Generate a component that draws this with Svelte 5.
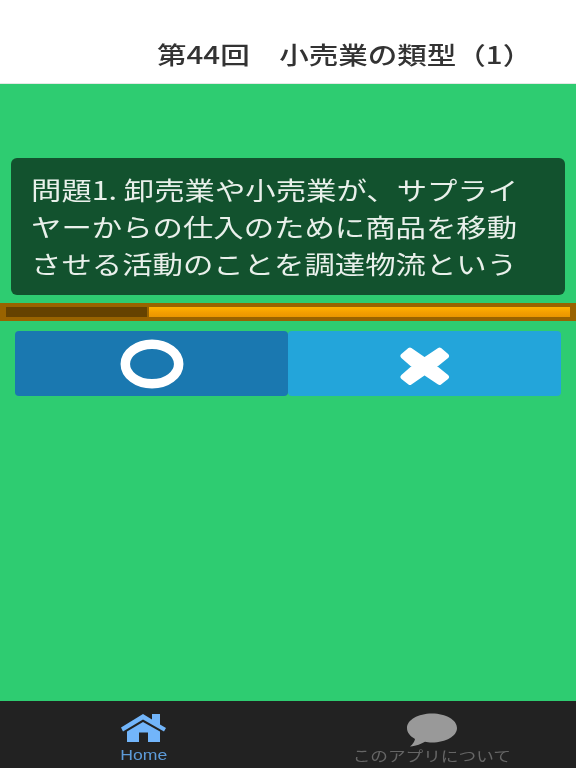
<script>
    let title = "第44回　小売業の類型（1）";
    let lines = [
        "問題1. 卸売業や小売業が、サプライ",
        "ヤーからの仕入のために商品を移動",
        "させる活動のことを調達物流という",
    ];
    let progress = 25;
</script>

<div class="page">
    <header class="top">
        <h1>{title}</h1>
    </header>

    <main class="quiz">
        <section class="question">
            <p>
                {#each lines as line}
                    <span>{line}</span>
                {/each}
            </p>
        </section>

        <div class="timer">
            <div class="timer-track">
                <div class="timer-used" style="width: {progress}%"></div>
                <div class="timer-left"></div>
            </div>
        </div>

        <div class="answers">
            <button class="answer yes" aria-label="正解">
                <svg width="64" height="50" viewBox="0 0 64 50">
                    <ellipse cx="32" cy="25" rx="26.7" ry="19.8" fill="none" stroke="#fff" stroke-width="9.500" />
                </svg>
            </button>
            <button class="answer no" aria-label="不正解">
                <svg width="50" height="39" viewBox="0 0 50 39">
                    <path
                        d="M3 9 L10 3 L24.500 13 L39.500 3 L46.500 9 L33.500 19.500 L46.500 30 L39.500 35.500 L24.500 25.500 L10 35.500 L3 30 L15 19.500 Z"
                        fill="#fff"
                        stroke="#fff"
                        stroke-width="5"
                        stroke-linejoin="round"
                    />
                </svg>
            </button>
        </div>
    </main>

    <nav class="tabs">
        <div class="tab active">
            <svg width="48" height="34" viewBox="0 0 48 34">
                <path d="M1 14.500 L23 1 L32 6.500 V1 H40 V11.500 L46 15 L44 18.500 L23 6.500 L3 18.500 Z" fill="#72b5fa" />
                <path d="M7 18.500 L23 9 L40 18.500 V29 H28 V19.500 H19 V29 H7 Z" fill="#72b5fa" />
            </svg>
            <span>Home</span>
        </div>
        <div class="tab">
            <svg width="52" height="34" viewBox="0 0 52 34">
                <path d="M26 0.500 C40 0.500 51 7 51 15 C51 23 40 29.500 26 29.500 C23 29.500 21 29.200 19 28.800 C15 31 11 33 4 33.500 C7 31 8.500 28.500 9 26 C4 23 1 19.500 1 15 C1 7 12 0.500 26 0.500 Z" fill="#999" />
            </svg>
            <span>このアプリについて</span>
        </div>
    </nav>
</div>

<style>
    :global(body) {
        margin: 0;
        font-family: "Noto Sans CJK JP", sans-serif;
    }

    .page {
        display: flex;
        flex-direction: column;
        width: 576px;
        height: 768px;
        overflow: hidden;
        background: #2ecc71;
    }

    .top {
        flex: 0 0 84px;
        box-sizing: border-box;
        padding: 37px 0 0 157px;
        background: #fff;
        border-bottom: 1px solid #e4e8e5;
    }

    h1 {
        margin: 0;
        width: 340px;
        font-size: 24px;
        line-height: 34px;
        font-weight: 500;
        color: #333;
        white-space: nowrap;
        transform: scaleX(1.23);
        transform-origin: left center;
        filter: blur(0.4px);
    }

    .quiz {
        flex: 1;
        padding-top: 74px;
    }

    .question {
        box-sizing: border-box;
        height: 137px;
        margin: 0 11px;
        padding: 13px 20px;
        background: #12522e;
        border-radius: 6px;
    }

    .question p {
        margin: 0;
        width: 420px;
        font-size: 25px;
        line-height: 37px;
        color: #e9f0eb;
        white-space: nowrap;
        transform: scaleX(1.215);
        transform-origin: left center;
        filter: blur(0.4px);
    }

    .question span {
        display: block;
    }

    .timer {
        box-sizing: border-box;
        height: 18px;
        margin-top: 8px;
        padding: 4px 6px;
        background: #996300;
    }

    .timer-track {
        display: flex;
        height: 10px;
    }

    .timer-used {
        background: #664200;
        margin-right: 2px;
    }

    .timer-left {
        flex: 1;
        background: linear-gradient(#ffb100, #f29d00 60%, #e89600);
    }

    .answers {
        display: flex;
        height: 65px;
        margin: 10px 15px 0;
    }

    .answer {
        flex: 1;
        display: flex;
        align-items: center;
        justify-content: center;
        padding: 0;
        border: 0;
        border-radius: 4px;
    }

    .yes {
        background: #1a78b0;
    }

    .no {
        background: #23a5da;
    }

    .no svg {
        margin-top: 5px;
    }

    .tabs {
        flex: 0 0 67px;
        display: flex;
        background: #222;
    }

    .tab {
        flex: 1;
        display: flex;
        flex-direction: column;
        align-items: center;
        padding-top: 12px;
        box-sizing: border-box;
        color: #666;
        font-size: 14px;
        line-height: 18px;
    }

    .tab svg {
        display: block;
    }

    .tab span {
        margin-top: -1px;
        white-space: nowrap;
        transform: scaleX(1.26);
        filter: blur(0.4px);
    }

    .tab.active {
        color: #5d9bd9;
        font-family: "Liberation Sans", sans-serif;
        font-size: 14px;
    }
</style>
